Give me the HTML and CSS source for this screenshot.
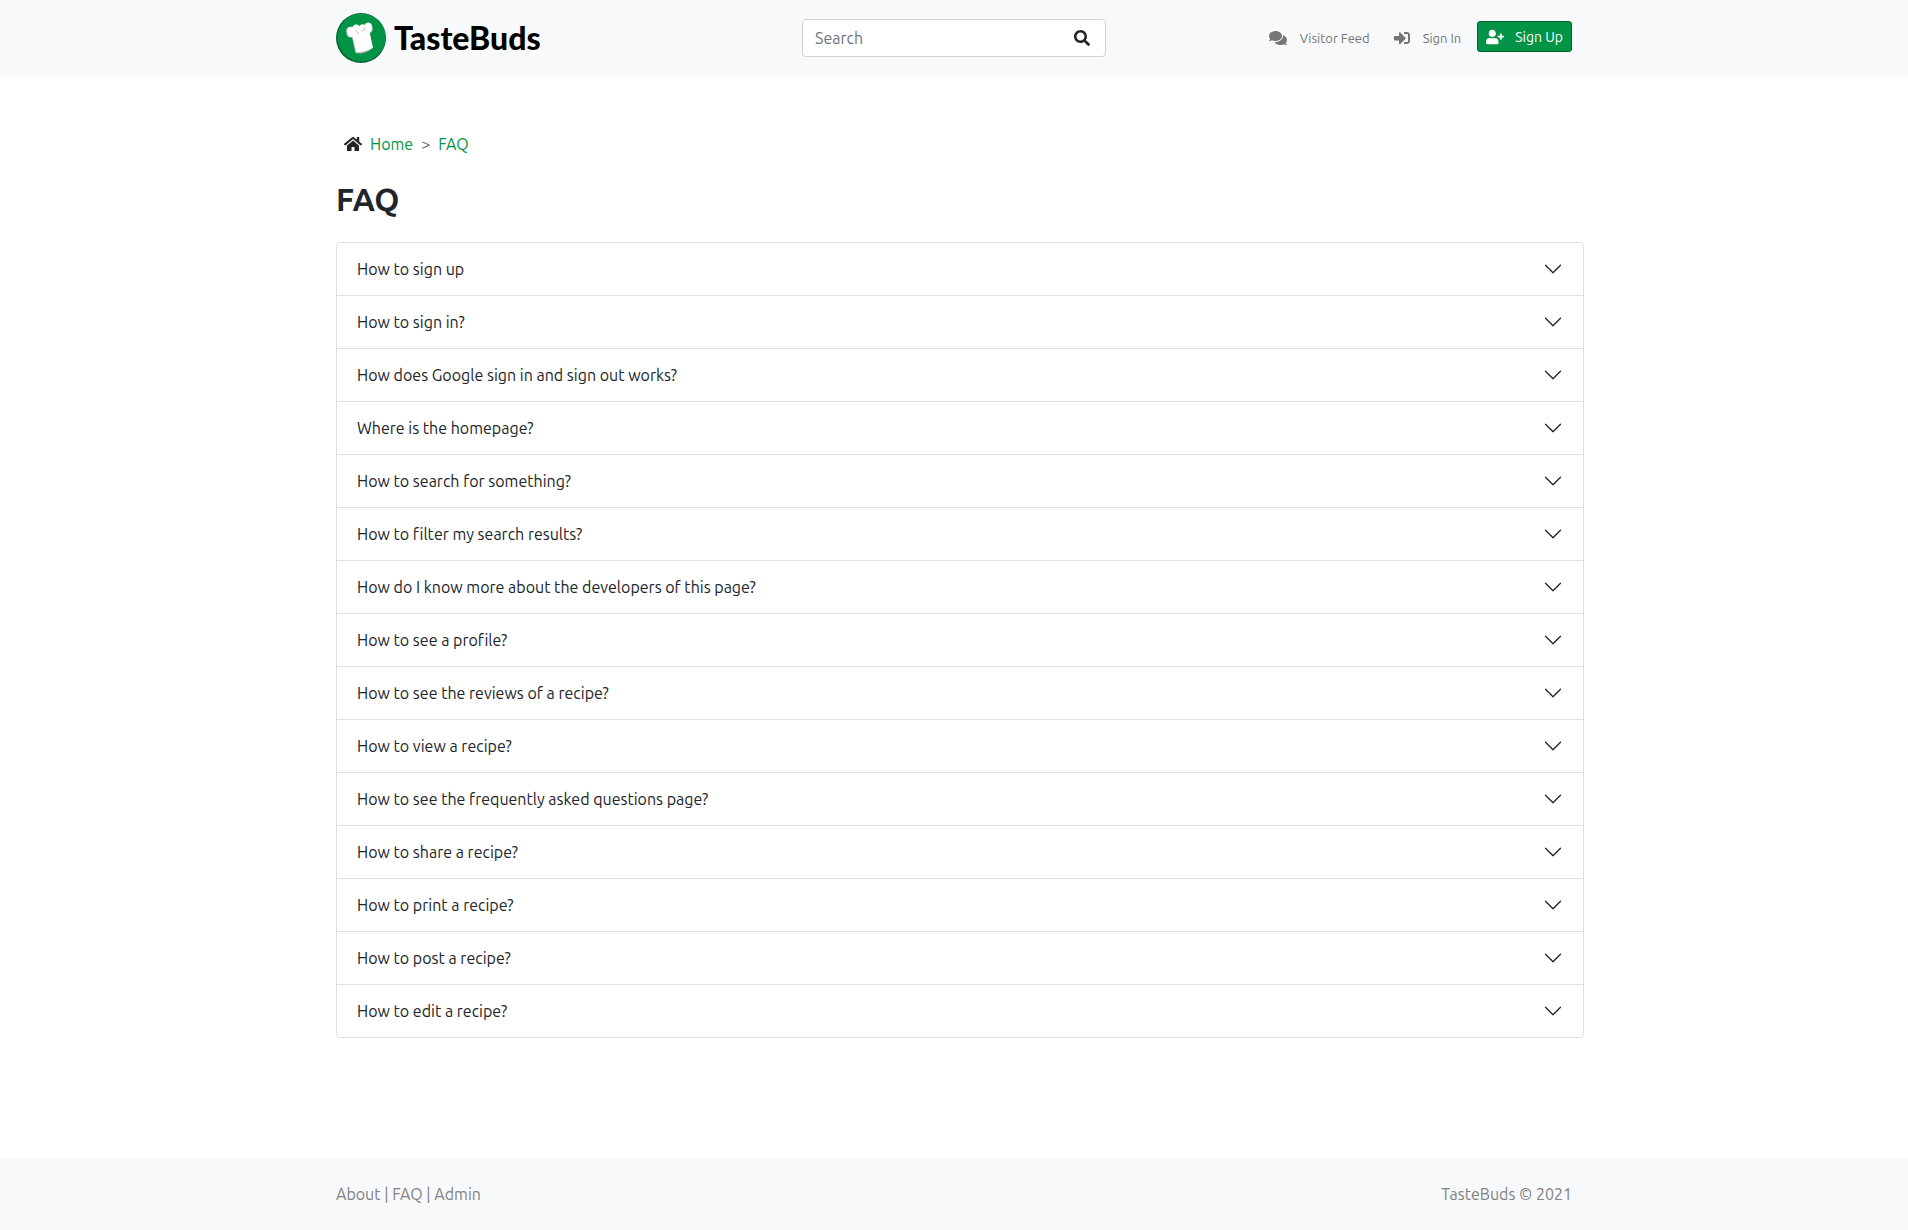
FILE: index.html
```html
<!DOCTYPE html>
<html lang="en">
<head>
<meta charset="utf-8">
<meta name="viewport" content="width=device-width, initial-scale=1">
<title>TasteBuds - FAQ</title>
<link rel="stylesheet" href="styles.css">
</head>
<body>
<header class="site-header">
  <div class="container header-grid">
    <a class="brand" href="#">
      <svg class="brand-mark" viewBox="0 0 50 50" aria-hidden="true">
        <circle cx="25" cy="25" r="25" fill="#04642f"/>
        <circle cx="25.500" cy="24.500" r="24" fill="#019447"/>
        <path d="M10.500 20C10 23 13 25.500 16 24.500L19.500 40Q28 42 36.500 35.500L34 20.500Q38 18 36 14L26 19L20 21Z" fill="#a9b0ac"/>
        <path d="M11 20.500C9 16 12.500 12.500 16.500 14C18 10.500 22 11 23.500 13C25 11 27.500 11 28.500 12C29.500 8.500 35 8.500 36 12.500C37 16 35.500 18.500 33.500 19.500L37 34.500Q29 39.500 20 39.500L16.500 24Q12.500 24.500 11 20.500Z" fill="#fff"/>
        <path d="M20 17Q20.500 20 23 20.500M29 14Q29 17.500 26 18.500" fill="none" stroke="#c3c8c5"/>
      </svg>
      <span>TasteBuds</span>
    </a>
    <form class="search" role="search">
      <input class="search-input" type="search" placeholder="Search" aria-label="Search">
      <button class="search-button" type="button" aria-label="Submit search">
        <svg class="icon" viewBox="0 0 512 512" aria-hidden="true"><path d="M505 442.700L405.300 343c-4.500-4.500-10.600-7-17-7H372c27.600-35.300 44-79.700 44-128C416 93.100 322.900 0 208 0S0 93.100 0 208s93.100 208 208 208c48.300 0 92.700-16.400 128-44v16.300c0 6.400 2.500 12.500 7 17l99.700 99.700c9.400 9.400 24.600 9.400 33.900 0l28.300-28.300c9.400-9.400 9.400-24.600.1-34zM208 336c-70.700 0-128-57.200-128-128 0-70.700 57.200-128 128-128 70.700 0 128 57.200 128 128 0 70.700-57.200 128-128 128z"/></svg>
      </button>
    </form>
    <nav class="user-nav" aria-label="Account">
      <a class="nav-link" href="#">
        <svg class="icon icon-wide" viewBox="0 0 576 512" aria-hidden="true"><path d="M416 192c0-88.400-93.100-160-208-160S0 103.600 0 192c0 34.300 14.100 65.900 38 92-13.400 30.200-35.500 54.200-35.800 54.500-2.200 2.300-2.800 5.700-1.500 8.700S4.800 352 8 352c36.600 0 66.900-12.300 88.700-25 32.200 15.700 70.300 25 111.300 25 114.900 0 208-71.600 208-160zm122 220c23.900-26 38-57.700 38-92 0-66.900-53.500-124.200-129.300-148.100.9 6.600 1.300 13.300 1.300 20.100 0 105.900-107.700 192-240 192-10.800 0-21.300-.8-31.700-1.900C207.800 439.600 281.800 480 368 480c41 0 79.100-9.200 111.300-25 21.800 12.700 52.100 25 88.700 25 3.200 0 6.100-1.900 7.300-4.800 1.300-2.900.7-6.300-1.500-8.700-.3-.3-22.400-24.200-35.800-54.500z"/></svg>
        <span>Visitor Feed</span>
      </a>
      <a class="nav-link" href="#">
        <svg class="icon" viewBox="0 0 512 512" aria-hidden="true"><path d="M416 448h-84c-6.600 0-12-5.400-12-12v-40c0-6.600 5.400-12 12-12h84c17.700 0 32-14.300 32-32V160c0-17.700-14.300-32-32-32h-84c-6.600 0-12-5.400-12-12V76c0-6.600 5.400-12 12-12h84c53 0 96 43 96 96v192c0 53-43 96-96 96zm-47-201L201 79c-15-15-41-4.500-41 17v96H24c-13.300 0-24 10.700-24 24v96c0 13.300 10.700 24 24 24h136v96c0 21.500 26 32 41 17l168-168c9.300-9.400 9.300-24.600 0-34z"/></svg>
        <span>Sign In</span>
      </a>
      <button class="sign-up" type="button">
        <svg class="icon icon-wide" viewBox="0 0 640 512" aria-hidden="true"><path d="M624 208h-64v-64c0-8.800-7.200-16-16-16h-32c-8.800 0-16 7.200-16 16v64h-64c-8.800 0-16 7.200-16 16v32c0 8.800 7.200 16 16 16h64v64c0 8.800 7.200 16 16 16h32c8.800 0 16-7.200 16-16v-64h64c8.800 0 16-7.200 16-16v-32c0-8.800-7.200-16-16-16zm-400 48c70.700 0 128-57.300 128-128S294.700 0 224 0 96 57.300 96 128s57.300 128 128 128zm89.600 32h-16.700c-22.200 10.200-46.900 16-72.900 16s-50.600-5.800-72.900-16h-16.700C60.200 288 0 348.200 0 422.400V464c0 26.500 21.500 48 48 48h352c26.500 0 48-21.500 48-48v-41.600c0-74.200-60.200-134.400-134.400-134.400z"/></svg>
        <span>Sign Up</span>
      </button>
    </nav>
  </div>
</header>

<main class="container content">
  <nav class="breadcrumb" aria-label="Breadcrumb">
    <svg class="icon icon-wide" viewBox="0 0 576 512" aria-hidden="true"><path d="M280.370 148.260L96 300.110V464a16 16 0 0 0 16 16l112.060-.29a16 16 0 0 0 15.920-16V368a16 16 0 0 1 16-16h64a16 16 0 0 1 16 16v95.640a16 16 0 0 0 16 16.050L464 480a16 16 0 0 0 16-16V300L295.670 148.260a12.190 12.190 0 0 0-15.300 0zM571.600 251.470L488 182.560V44.050a12 12 0 0 0-12-12h-56a12 12 0 0 0-12 12v72.610L318.470 43a48 48 0 0 0-61 0L4.340 251.470a12 12 0 0 0-1.600 16.900l25.500 31A12 12 0 0 0 45.150 301l235.220-193.740a12.190 12.190 0 0 1 15.300 0L530.900 301a12 12 0 0 0 16.900-1.600l25.500-31a12 12 0 0 0-1.700-16.930z"/></svg>
    <a href="#">Home</a>
    <span class="separator">&gt;</span>
    <a href="#">FAQ</a>
  </nav>
  <h1 class="page-title">FAQ</h1>
  <svg width="0" height="0" class="sprite" aria-hidden="true">
    <symbol id="chevron" viewBox="0 0 16 16"><path fill-rule="evenodd" d="M1.646 4.646a.5.5 0 0 1 .708 0L8 10.293l5.646-5.647a.5.5 0 0 1 .708.708l-6 6a.5.5 0 0 1-.708 0l-6-6a.5.5 0 0 1 0-.708z"/></symbol>
  </svg>
  <div class="accordion">
    <button class="question" type="button" aria-expanded="false"><span>How to sign up</span><svg class="chevron" aria-hidden="true"><use href="#chevron"/></svg></button>
    <button class="question" type="button" aria-expanded="false"><span>How to sign in?</span><svg class="chevron" aria-hidden="true"><use href="#chevron"/></svg></button>
    <button class="question" type="button" aria-expanded="false"><span>How does Google sign in and sign out works?</span><svg class="chevron" aria-hidden="true"><use href="#chevron"/></svg></button>
    <button class="question" type="button" aria-expanded="false"><span>Where is the homepage?</span><svg class="chevron" aria-hidden="true"><use href="#chevron"/></svg></button>
    <button class="question" type="button" aria-expanded="false"><span>How to search for something?</span><svg class="chevron" aria-hidden="true"><use href="#chevron"/></svg></button>
    <button class="question" type="button" aria-expanded="false"><span>How to filter my search results?</span><svg class="chevron" aria-hidden="true"><use href="#chevron"/></svg></button>
    <button class="question" type="button" aria-expanded="false"><span>How do I know more about the developers of this page?</span><svg class="chevron" aria-hidden="true"><use href="#chevron"/></svg></button>
    <button class="question" type="button" aria-expanded="false"><span>How to see a profile?</span><svg class="chevron" aria-hidden="true"><use href="#chevron"/></svg></button>
    <button class="question" type="button" aria-expanded="false"><span>How to see the reviews of a recipe?</span><svg class="chevron" aria-hidden="true"><use href="#chevron"/></svg></button>
    <button class="question" type="button" aria-expanded="false"><span>How to view a recipe?</span><svg class="chevron" aria-hidden="true"><use href="#chevron"/></svg></button>
    <button class="question" type="button" aria-expanded="false"><span>How to see the frequently asked questions page?</span><svg class="chevron" aria-hidden="true"><use href="#chevron"/></svg></button>
    <button class="question" type="button" aria-expanded="false"><span>How to share a recipe?</span><svg class="chevron" aria-hidden="true"><use href="#chevron"/></svg></button>
    <button class="question" type="button" aria-expanded="false"><span>How to print a recipe?</span><svg class="chevron" aria-hidden="true"><use href="#chevron"/></svg></button>
    <button class="question" type="button" aria-expanded="false"><span>How to post a recipe?</span><svg class="chevron" aria-hidden="true"><use href="#chevron"/></svg></button>
    <button class="question" type="button" aria-expanded="false"><span>How to edit a recipe?</span><svg class="chevron" aria-hidden="true"><use href="#chevron"/></svg></button>
  </div>
</main>

<footer class="site-footer">
  <div class="container footer-row">
    <div class="footer-links"><a href="#">About</a> | <a href="#">FAQ</a> | <a href="#">Admin</a></div>
    <div>TasteBuds © 2021</div>
  </div>
</footer>
</body>
</html>
```
FILE: styles.css
```css
*, *::before, *::after { box-sizing: border-box; }

body {
  margin: 0;
  min-height: 100vh;
  display: flex;
  flex-direction: column;
  background: #fff;
  color: #212529;
  font: 16px/24px Ubuntu, "Noto Sans", sans-serif;
}

a { text-decoration: none; }
button { font: inherit; cursor: pointer; }

.container {
  width: 100%;
  max-width: 1276px;
  margin: 0 auto;
  padding: 0 20px;
}

.icon { display: block; height: 16px; width: 16px; fill: currentColor; flex: none; }
.icon-wide { width: 18px; }

.site-header { background: #f8f9fb; }
.header-grid {
  display: grid;
  grid-template-columns: 1fr minmax(160px, 304px) 1fr;
  align-items: center;
  min-height: 76px;
}
.brand {
  display: flex;
  align-items: center;
  gap: 8px;
  color: #000;
  font: 900 32px/40px Lato, "Open Sans", sans-serif;
}
.brand-mark { width: 50px; height: 50px; }

.search {
  display: flex;
  align-items: center;
  height: 38px;
  background: #fff;
  border: 1px solid #ced4da;
  border-radius: 4px;
}
.search-input {
  flex: 1;
  min-width: 0;
  border: 0;
  padding: 0 12px;
  background: none;
  color: inherit;
  font: inherit;
}
.search-input::placeholder { color: #6c757d; opacity: 1; }
.search-button { border: 0; background: none; padding: 0 15px; color: #212529; }

.user-nav {
  display: flex;
  align-items: center;
  justify-content: flex-end;
  gap: 16px;
}
.nav-link {
  display: flex;
  align-items: center;
  gap: 13px;
  color: #757575;
  font-size: 13px;
}
.nav-link:first-child { margin-right: 8px; }
.sign-up {
  display: flex;
  align-items: center;
  gap: 11px;
  height: 31px;
  margin-bottom: 3px;
  padding: 0 8px;
  border: 1px solid #04642f;
  border-radius: 3px;
  background: #019447;
  color: #fff;
  font-size: 14px;
}

.content { flex: 1; padding-top: 56px; padding-bottom: 120px; }
.breadcrumb { display: flex; align-items: center; gap: 8px; padding-left: 8px; }
.breadcrumb a { color: #019447; }
.separator { color: #6c757d; }
.page-title { margin: 24px 0; font-size: 32px; line-height: 38px; font-weight: 600; }

.sprite { position: absolute; }
.accordion {
  margin-right: -12px;
  border: 1px solid #dfdfdf;
  border-radius: 4px;
  text-rendering: optimizeSpeed;
}
.question {
  display: flex;
  align-items: center;
  justify-content: space-between;
  width: 100%;
  height: 53px;
  padding: 0 20px;
  border: 0;
  border-bottom: 1px solid #dfdfdf;
  background: none;
  color: #212529;
  text-align: left;
  text-rendering: inherit;
}
.question:last-child { height: 52px; border-bottom: 0; }
.chevron { width: 20px; height: 20px; fill: #212529; flex: none; }

.site-footer { background: #f8f9fb; color: #828282; }
.footer-row {
  display: flex;
  justify-content: space-between;
  align-items: center;
  min-height: 72px;
}
.footer-row a { color: inherit; }
```
